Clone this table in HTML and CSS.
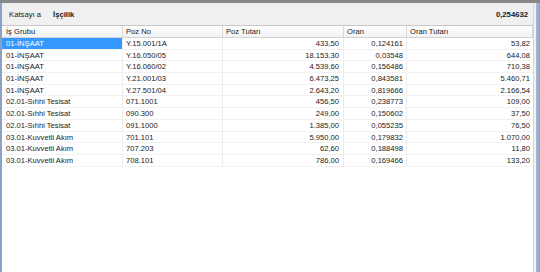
FILE: index.html
```html
<!DOCTYPE html>
<html>
<head>
<meta charset="utf-8">
<link rel="stylesheet" href="styles.css">
</head>
<body>
<div class="topbar"></div>
<div class="frame">
  <div class="content">
    <div class="panel">
      <span class="lbl">Katsayı a</span>
      <span class="lbl-b">İşçilik</span>
      <span class="spacer"></span>
      <span class="val">0,254632</span>
    </div>
    <div class="grid">
      <div class="row head">
        <div class="c c1">İş Grubu</div>
        <div class="c c2">Poz No</div>
        <div class="c c3">Poz Tutarı</div>
        <div class="c c4">Oran</div>
        <div class="c c5">Oran Tutarı</div>
      </div>
      <div class="row sel">
        <div class="c c1">01-İNŞAAT</div><div class="c c2">Y.15.001/1A</div><div class="c c3 n">433,50</div><div class="c c4 n">0,124161</div><div class="c c5 n">53,82</div>
      </div>
      <div class="row">
        <div class="c c1">01-İNŞAAT</div><div class="c c2">Y.16.050/05</div><div class="c c3 n">18.153,30</div><div class="c c4 n">0,03548</div><div class="c c5 n">644,08</div>
      </div>
      <div class="row">
        <div class="c c1">01-İNŞAAT</div><div class="c c2">Y.16.060/02</div><div class="c c3 n">4.539,60</div><div class="c c4 n">0,156486</div><div class="c c5 n">710,38</div>
      </div>
      <div class="row">
        <div class="c c1">01-İNŞAAT</div><div class="c c2">Y.21.001/03</div><div class="c c3 n">6.473,25</div><div class="c c4 n">0,843581</div><div class="c c5 n">5.460,71</div>
      </div>
      <div class="row">
        <div class="c c1">01-İNŞAAT</div><div class="c c2">Y.27.501/04</div><div class="c c3 n">2.643,20</div><div class="c c4 n">0,819666</div><div class="c c5 n">2.166,54</div>
      </div>
      <div class="row">
        <div class="c c1">02.01-Sıhhi Tesisat</div><div class="c c2">071.1001</div><div class="c c3 n">456,50</div><div class="c c4 n">0,238773</div><div class="c c5 n">109,00</div>
      </div>
      <div class="row">
        <div class="c c1">02.01-Sıhhi Tesisat</div><div class="c c2">090.300</div><div class="c c3 n">249,00</div><div class="c c4 n">0,150602</div><div class="c c5 n">37,50</div>
      </div>
      <div class="row">
        <div class="c c1">02.01-Sıhhi Tesisat</div><div class="c c2">091.1000</div><div class="c c3 n">1.385,00</div><div class="c c4 n">0,055235</div><div class="c c5 n">76,50</div>
      </div>
      <div class="row">
        <div class="c c1">03.01-Kuvvetli Akım</div><div class="c c2">701.101</div><div class="c c3 n">5.950,00</div><div class="c c4 n">0,179832</div><div class="c c5 n">1.070,00</div>
      </div>
      <div class="row">
        <div class="c c1">03.01-Kuvvetli Akım</div><div class="c c2">707.203</div><div class="c c3 n">62,60</div><div class="c c4 n">0,188498</div><div class="c c5 n">11,80</div>
      </div>
      <div class="row">
        <div class="c c1">03.01-Kuvvetli Akım</div><div class="c c2">708.101</div><div class="c c3 n">786,00</div><div class="c c4 n">0,169466</div><div class="c c5 n">133,20</div>
      </div>
    </div>
  </div>
  <div class="rside"></div>
</div>
</body>
</html>
```
FILE: styles.css
```css
html, body {
  margin: 0;
  padding: 0;
}
body {
  width: 540px;
  height: 272px;
  overflow: hidden;
  background: #ffffff;
  font-family: "Liberation Sans", Arial, sans-serif;
  font-size: 7.6px;
  color: #1a1a1a;
}
.topbar {
  height: 3px;
  background: #888888;
}
.frame {
  display: flex;
  height: 269px;
  border-left: 2px solid #8aa2c4;
}
.content {
  width: 531px;
  display: flex;
  flex-direction: column;
  background: #ffffff;
}
.rside {
  width: 7px;
  border-left: 1px solid #d6d6d6;
  background: linear-gradient(to right, #eef1f6 0, #eef1f6 2px, #a9b9d2 2px, #8fa3c2 100%);
}
.panel {
  height: 22px;
  background: #f0f0f0;
  display: flex;
  align-items: center;
  padding: 0 5px 0 7px;
  font-size: 7.7px;
}
.lbl {
  width: 44px;
}
.lbl-b, .val {
  font-weight: bold;
}
.spacer {
  flex: 1;
}
.grid {
  flex: 1;
  border-top: 1px solid #c8c8c8;
}
.row {
  display: flex;
  height: 11.7px;
  line-height: 11.7px;
  border-bottom: 1px solid #f2f2f2;
  box-sizing: border-box;
}
.head {
  height: 12px;
  line-height: 12px;
  background: linear-gradient(#ffffff, #f1f2f4);
  border-bottom: 1px solid #d4d4d4;
}
.c {
  box-sizing: border-box;
  border-right: 1px solid #ececec;
  white-space: nowrap;
  overflow: hidden;
  padding: 0 3px;
}
.head .c {
  border-right: 1px solid #d8d8d8;
}
.c1 { width: 121px; padding-left: 4px; }
.c2 { width: 100px; }
.c3 { width: 121px; padding-right: 4px; }
.c4 { width: 63px; }
.c5 { width: 126px; border-right: none; }
.n { text-align: right; }
.sel .c1 {
  background: #3399ff;
  color: #ffffff;
}
```
